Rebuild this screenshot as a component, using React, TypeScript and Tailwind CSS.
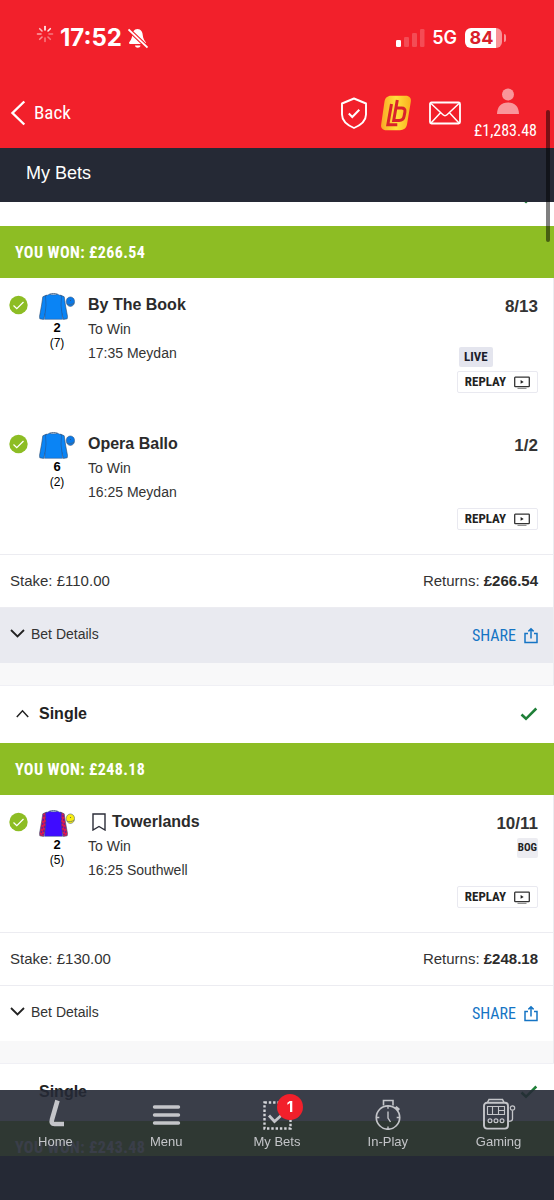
import React from "react";

const condensed =
  "font-['Roboto_Condensed','Liberation_Sans_Narrow',Roboto,sans-serif]";

type Silk = { body: string; sleeve: string; cap: string; checked?: boolean };

type Selection = {
  name: string;
  number: number;
  draw: number;
  event: string;
  odds: string;
  silk: Silk;
  live?: boolean;
  bog?: boolean;
  saved?: boolean;
};

const blueSilk: Silk = { body: "#0a84f5", sleeve: "#0a84f5", cap: "#0a78e6" };
const purpleSilk: Silk = {
  body: "#3f0cff",
  sleeve: "#e0184f",
  cap: "#f8ec10",
  checked: true,
};

const doubleBet: Selection[] = [
  {
    name: "By The Book",
    number: 2,
    draw: 7,
    event: "17:35 Meydan",
    odds: "8/13",
    silk: blueSilk,
    live: true,
  },
  {
    name: "Opera Ballo",
    number: 6,
    draw: 2,
    event: "16:25 Meydan",
    odds: "1/2",
    silk: blueSilk,
  },
];

const singleBet: Selection[] = [
  {
    name: "Towerlands",
    number: 2,
    draw: 5,
    event: "16:25 Southwell",
    odds: "10/11",
    silk: purpleSilk,
    bog: true,
    saved: true,
  },
];

function Tick() {
  return (
    <svg width="18" height="14" viewBox="0 0 18 14" fill="none">
      <path d="M1.5 7.5 6 11.8 16.3 1.5" stroke="#1f7f38" strokeWidth="2.6" />
    </svg>
  );
}

function Silks({ silk }: { silk: Silk }) {
  return (
    <svg width="36" height="27" viewBox="0 0 36 27" fill="none">
      <path
        d="M7.5 2 3.8 3.8 2.6 12 .5 23.500l.3 2.300 3.800.6L8 14Z"
        fill={silk.sleeve}
        stroke="#2c4a6e"
        strokeWidth=".6"
      />
      <path
        d="M21.500 2l3.700 1.800 1.200 8.200 2.100 11.500-.3 2.300-3.800.6L21 14Z"
        fill={silk.sleeve}
        stroke="#2c4a6e"
        strokeWidth=".6"
      />
      {silk.checked && (
        <g stroke="#6b1a9a" strokeWidth="1.4" strokeDasharray="2 2">
          <path d="M5 5 2 25M7 8 4 25M24 5l3 20M22 8l3 17" />
        </g>
      )}
      <path
        d="M10.500 1.300c2.500.7 5.500.7 8 0l4 1.700-.5 9 1.600 14.300H5.500L7 12l-.5-9Z"
        fill={silk.body}
        stroke="#2b4f80"
        strokeWidth=".5"
      />
      <path
        d="M10.500 1.200c2.500-.9 5.500-.9 8 0"
        stroke="#2c4a6e"
        strokeWidth=".8"
      />
      <ellipse
        cx="31.4"
        cy="8.7"
        rx="4.2"
        ry="4.8"
        fill={silk.cap}
        stroke="#3a5575"
        strokeWidth=".5"
      />
      <path d="M28 11c2 1.200 5 .8 7-1" stroke="#4f6470" strokeWidth=".7" />
      <circle cx="31.5" cy="7.5" r=".5" fill="#35506e" />
    </svg>
  );
}

function WonBar({ amount }: { amount: string }) {
  return (
    <div
      className={`${condensed} flex h-13 items-center bg-[#8dbd24] pt-0.5 pl-[15px] text-base font-bold tracking-wide text-white`}
    >
      YOU WON: {amount}
    </div>
  );
}

function SelectionRow({ item }: { item: Selection }) {
  return (
    <div className="flex pt-[15px] pr-[15px] pb-6 pl-2">
      <svg
        className="mt-0.5 shrink-0"
        width="20"
        height="20"
        viewBox="0 0 20 20"
        fill="none"
      >
        <circle cx="10.5" cy="10" r="9.2" fill="#8dbd24" />
        <path d="m5.5 10.5 3.3 3.2L15.5 7" stroke="#fff" strokeWidth="1.3" />
      </svg>
      <div className="ml-[11px] flex w-9 flex-col items-center text-black">
        <Silks silk={item.silk} />
        <span className="text-[13px] leading-4 font-bold">{item.number}</span>
        <span className="text-xs leading-[14px]">({item.draw})</span>
      </div>
      <div className="ml-[13px] flex-1 text-sm text-[#333]">
        <h3 className="flex h-6 items-center text-base font-bold text-[#2b2b2b]">
          {item.saved && (
            <svg
              className="mr-1.5 ml-1"
              width="14"
              height="18"
              viewBox="0 0 14 18"
              fill="none"
            >
              <path
                d="M1 1h12v16l-6-3.5L1 17Z"
                stroke="#2b2d38"
                strokeWidth="1.4"
              />
            </svg>
          )}
          {item.name}
        </h3>
        <p className="leading-6">To Win</p>
        <p className="leading-6">{item.event}</p>
      </div>
      <div className="flex flex-col items-end">
        <span className="mt-0.5 text-[17px] leading-6 font-bold text-[#333]">
          {item.odds}
        </span>
        <div className="flex min-h-[50px] w-full flex-col">
          {item.bog && (
            <span
              className={`${condensed} mt-0.5 h-5 self-end rounded-xs bg-[#ececf1] px-px text-[11px] leading-5 font-bold text-[#222]`}
            >
              BOG
            </span>
          )}
          {item.live && (
            <span
              className={`${condensed} mt-7 mb-1 ml-0.5 h-5 w-[34px] rounded-xs bg-[#e4e5ee] text-center text-[13px] leading-5 font-bold text-[#1b1d2b]`}
            >
              LIVE
            </span>
          )}
        </div>
        <button
          className={`${condensed} flex h-[22px] items-center gap-2 rounded-xs border border-[#e9e9f0] px-[7px] text-[13px] font-bold text-[#222]`}
        >
          REPLAY
          <svg width="16" height="13" viewBox="0 0 16 13" fill="none">
            <rect
              x=".7"
              y="1.2"
              width="14.6"
              height="9.4"
              rx=".6"
              stroke="#333"
              strokeWidth="1.3"
            />
            <path d="M6.6 4v3.8L9.7 5.9Z" fill="#222" />
            <path d="M3.5 12.3h9" stroke="#777" />
          </svg>
        </button>
      </div>
    </div>
  );
}

function BetHeader({ title, open }: { title: string; open?: boolean }) {
  return (
    <button className="flex h-[58px] w-full items-center border-t border-[#f0f0f5] pr-4 pb-0.5 pl-4 text-[#222]">
      <span className="w-[13px]">
        {open && (
          <svg width="13" height="9" viewBox="0 0 13 9" fill="none">
            <path d="m.8 8 5.7-6.200L12.200 8" stroke="#222" strokeWidth="1.5" />
          </svg>
        )}
      </span>
      <span className="ml-2.5 flex-1 text-left text-base font-bold">
        {title}
      </span>
      <Tick />
    </button>
  );
}

function BetFooter({
  stake,
  returns,
  shaded,
}: {
  stake: string;
  returns: string;
  shaded?: boolean;
}) {
  return (
    <>
      <div className="flex h-[53px] items-center justify-between border-t border-[#ececf1] pr-[15px] pl-2.5 text-[15px] text-[#333]">
        <span>Stake: {stake}</span>
        <span>
          Returns: <b className="text-[#2b2b2b]">{returns}</b>
        </span>
      </div>
      <div
        className={`flex h-14 items-center justify-between border-t border-[#ececf1] pr-[15px] pl-2.5 ${shaded ? "bg-[#e9eaf0]" : "bg-white"}`}
      >
        <button className="flex items-center gap-1.5 pb-1 text-sm text-[#333]">
          <svg width="15" height="9" viewBox="0 0 15 9" fill="none">
            <path d="m1 1 6.5 6.5L14 1" stroke="#222" strokeWidth="1.8" />
          </svg>
          Bet Details
        </button>
        <button
          className={`${condensed} flex items-center gap-2 text-base text-[#1574c4]`}
        >
          SHARE
          <svg width="14" height="17" viewBox="0 0 14 17" fill="none">
            <path
              d="M4 6.5H1v9h12v-9h-3M7 11.5V2M4.4 4.4 7 1.8l2.6 2.6"
              stroke="#1574c4"
              strokeWidth="1.5"
            />
          </svg>
        </button>
      </div>
      <div className="h-[22px] bg-[#f8f8f9]" />
    </>
  );
}

function StatusBar() {
  return (
    <div className="flex h-[76px] items-center pr-12 pl-9 font-[Inter,sans-serif] text-white">
      <svg
        className="mb-2"
        width="18"
        height="18"
        viewBox="0 0 18 18"
        fill="none"
      >
        <g stroke="#fff" strokeWidth="1.6" strokeLinecap="round">
          <path d="M9 1.5V5" />
          <path d="M14.3 3.7 12 6" opacity=".9" />
          <path d="M16.5 9H13" opacity=".4" />
          <path d="M14.3 14.3 12 12" opacity=".4" />
          <path d="M9 16.5V13" opacity=".4" />
          <path d="M3.7 14.3 6 12" opacity=".5" />
          <path d="M1.5 9H5" opacity=".6" />
          <path d="M3.7 3.7 6 6" opacity=".7" />
        </g>
      </svg>
      <span className="ml-1.5 text-2xl font-bold">17:52</span>
      <svg
        className="ml-1.5"
        width="20"
        height="21"
        viewBox="0 0 20 21"
        fill="none"
      >
        <path
          d="M9.5 1C6 1.2 4.3 4 4.2 7.5 4 11 2 13 1.2 14.3c-.5 1 0 1.7 1 1.7h14.6c1 0 1.5-.7 1-1.7-.8-1.3-2.8-3.3-3-6.8C14.7 4 13 1.2 9.5 1Z"
          fill="#fff"
        />
        <path d="M7 17.5h5.5c-.3 3-5.2 3-5.5 0Z" fill="#fff" />
        <path d="m.5 1.5 19 18" stroke="#f2202b" strokeWidth="4" />
        <path d="m.5 1.5 19 18" stroke="#fff" strokeWidth="1.8" />
      </svg>
      <div className="flex-1" />
      <svg width="30" height="18" viewBox="0 0 30 18" fill="#fff">
        <rect x="0" y="11" width="5" height="7" rx="1.3" />
        <rect x="8" y="8" width="5" height="10" rx="1.3" opacity=".2" />
        <rect x="16" y="4" width="5" height="14" rx="1.3" opacity=".2" />
        <rect x="24" y="0" width="4.5" height="18" rx="1.3" opacity=".2" />
      </svg>
      <span className="ml-1.5 text-lg font-semibold">5G</span>
      <span className="ml-2 flex h-5 w-[37px] items-center justify-center rounded-md bg-linear-to-r from-white from-84% to-[#f99297] to-84% pr-1 text-lg font-bold text-[#d8202b]">
        84
      </span>
      <span className="ml-0.5 h-2 w-0.5 rounded-r-full bg-[#f99297]" />
    </div>
  );
}

function TopBar() {
  return (
    <div
      className={`${condensed} flex h-18 items-center pt-0.5 pr-[17px] pl-2.5 text-white`}
    >
      <button className="flex items-center gap-2 text-[19px]">
        <svg width="16" height="26" viewBox="0 0 16 26" fill="none">
          <path
            d="M14.3 1.5 2.5 13l11.8 11.5"
            stroke="#fff"
            strokeWidth="2.4"
          />
        </svg>
        Back
      </button>
      <div className="flex-1" />
      <button aria-label="Safer gambling">
        <svg
          width="28"
          height="32"
          viewBox="0 0 28 32"
          fill="none"
          stroke="#fff"
        >
          <path
            d="M14 1.500 26 6.500v11c0 6-5 10.500-12 13.500C7 28 2 23.500 2 17.500v-11Z"
            strokeWidth="1.9"
            strokeLinejoin="round"
          />
          <path d="m8.800 16.500 3.500 3.500 7-7.200" strokeWidth="2" />
        </svg>
      </button>
      <button aria-label="Ladbucks" className="ml-3">
        <svg width="32" height="36" viewBox="0 0 32 36" fill="none">
          <defs>
            <linearGradient id="gold" x1="0" y1="0" x2="1" y2="0">
              <stop offset="0" stopColor="#f9a825" />
              <stop offset=".5" stopColor="#ffe13c" />
              <stop offset="1" stopColor="#fbb01e" />
            </linearGradient>
          </defs>
          <path
            d="M11 .8h14.500c4 0 6 2.400 5.300 6L27 29.500c-.7 3.600-3.500 5.700-7 5.700H6.500c-4 0-6-2.400-5.300-6L4.500 6.500C5.100 3 7.500.8 11 .8Z"
            fill="url(#gold)"
          />
          <path d="M11.500 9 7.800 29.700h9.500" stroke="#d9222b" strokeWidth="3" />
          <path
            d="m17.300 5-3.600 20.500h5.500c3 0 4.400-1.400 4.900-4.200l.8-4.300c.5-2.800-.8-4-3.300-4h-5.200"
            stroke="#d9222b"
            strokeWidth="3"
          />
        </svg>
      </button>
      <button aria-label="Messages" className="ml-4">
        <svg
          width="34"
          height="24"
          viewBox="0 0 34 24"
          fill="none"
          stroke="#fff"
        >
          <rect x="2" y="1.5" width="30" height="21" rx="1.5" strokeWidth="1.8" />
          <path
            d="m3 2.500 12 11.300c1.300 1.200 2.700 1.200 4 0L31 2.500M3 22l9.500-10.300M31 22l-9.500-10.300"
            strokeWidth="1.5"
          />
        </svg>
      </button>
      <button className="mt-1 ml-3 flex flex-col items-center gap-1 text-base leading-6">
        <svg
          className="ml-1"
          width="24"
          height="28"
          viewBox="0 0 24 28"
          fill="#f9969b"
        >
          <circle cx="12" cy="7.5" r="6" />
          <path d="M1 27c.3-7.500 4-11.500 11-11.500S22.700 19.500 23 27Z" />
        </svg>
        £1,283.48
      </button>
    </div>
  );
}

function LogoIcon() {
  return (
    <svg width="32" height="32" viewBox="0 0 32 32" fill="none">
      <path
        d="M18.500 2.500 13 21.500c-.8 2.800 0 4.500 2.500 4.500H25"
        stroke="#c4c5c9"
        strokeWidth="4.6"
      />
    </svg>
  );
}

function MenuIcon() {
  return (
    <svg width="32" height="32" viewBox="0 0 32 32" fill="none">
      <path
        d="M4.500 9h24M4.500 17h24M4.500 25h24"
        stroke="#c4c5c9"
        strokeWidth="3.4"
        strokeLinecap="round"
      />
    </svg>
  );
}

function BetsIcon() {
  return (
    <svg width="32" height="32" viewBox="0 0 32 32" fill="none">
      <rect
        x="3.5"
        y="4.5"
        width="26"
        height="26"
        stroke="#d4d5d9"
        strokeWidth="2.4"
        strokeDasharray="2.4 1.9"
      />
      <path d="m8 17.500 5.500 6 11-10" stroke="#c4c5c9" strokeWidth="2.8" />
    </svg>
  );
}

function StopwatchIcon() {
  return (
    <svg
      width="32"
      height="32"
      viewBox="0 0 32 32"
      fill="none"
      stroke="#c4c5c9"
    >
      <circle cx="16" cy="19.5" r="11.7" strokeWidth="1.7" />
      <path d="M11.500 7.500v-5H21v5" strokeWidth="1.6" />
      <path d="m23.500 9 3.500 3.200" strokeWidth="3" />
      <path
        d="M16 13.500V20l2.500 4M16 8v2.800M16 28.500V31M4.500 19.500h2.800M24.700 19.500h2.800"
        strokeWidth="1.4"
      />
    </svg>
  );
}

function SlotsIcon() {
  return (
    <svg
      width="36"
      height="32"
      viewBox="0 0 36 32"
      fill="none"
      stroke="#c4c5c9"
    >
      <path d="M6.500 4.500 8 1.500h13.500L23 4.500" strokeWidth="1.5" />
      <rect x="3" y="4.8" width="24" height="25.8" rx="3" strokeWidth="1.9" />
      <path
        d="M6.500 8.500h17v8h-17ZM11.500 8.500v8M17.500 8.500v8M17.500 12.500h6"
        strokeWidth="1.1"
      />
      <circle cx="9" cy="22.8" r="1.9" strokeWidth="1.2" />
      <circle cx="15" cy="22.8" r="1.9" strokeWidth="1.2" />
      <circle cx="21" cy="22.8" r="1.9" strokeWidth="1.2" />
      <circle cx="31.5" cy="10" r="2.2" strokeWidth="1.2" />
      <path d="M31.500 12.500V21c0 1.500-1 2.300-4 2.300" strokeWidth="1.3" />
    </svg>
  );
}

const tabs = [
  { label: "Home", icon: <LogoIcon /> },
  { label: "Menu", icon: <MenuIcon /> },
  { label: "My Bets", icon: <BetsIcon />, badge: 1 },
  { label: "In-Play", icon: <StopwatchIcon /> },
  { label: "Gaming", icon: <SlotsIcon /> },
];

function BottomNav() {
  return (
    <nav className="fixed inset-x-0 bottom-0">
      <div className="flex h-[66px] bg-[#252935]/90 pt-2">
        {tabs.map((tab) => (
          <a
            key={tab.label}
            href="#"
            className="flex flex-1 flex-col items-center text-[13px] leading-5 text-[#c4c5c9]"
          >
            <span className="relative mb-0.5">
              {tab.icon}
              {tab.badge && (
                <span className="absolute -top-1 left-4 flex size-[26px] items-center justify-center rounded-full bg-[#f2202b] font-[Inter,sans-serif] text-[15px] font-bold text-white">
                  {tab.badge}
                </span>
              )}
            </span>
            {tab.label}
          </a>
        ))}
      </div>
      <div className="h-11 bg-[#252935]" />
    </nav>
  );
}

export default function App() {
  return (
    <div className="flex h-screen flex-col overflow-hidden bg-white font-['Liberation_Sans',Arial,sans-serif]">
      <header className="shrink-0">
        <div className="bg-[#f2202b]">
          <StatusBar />
          <TopBar />
        </div>
        <h1 className="flex h-[54px] items-center bg-[#252935] pb-1 pl-[26px] text-lg text-white">
          My Bets
        </h1>
      </header>
      <main className="min-h-0 flex-1 overflow-hidden">
        <section>
          <div className="flex h-6 justify-end overflow-hidden pr-4">
            <div className="-mt-3">
              <Tick />
            </div>
          </div>
          <WonBar amount="£266.54" />
          <div className="border-r border-[#ececf0]">
            {doubleBet.map((item) => (
              <SelectionRow key={item.name} item={item} />
            ))}
            <BetFooter stake="£110.00" returns="£266.54" shaded />
          </div>
        </section>
        <section>
          <BetHeader title="Single" open />
          <WonBar amount="£248.18" />
          <div className="border-r border-[#ececf0]">
            {singleBet.map((item) => (
              <SelectionRow key={item.name} item={item} />
            ))}
            <BetFooter stake="£130.00" returns="£248.18" />
          </div>
        </section>
        <section>
          <BetHeader title="Single" />
          <WonBar amount="£243.48" />
        </section>
      </main>
      <div className="fixed top-[110px] right-1 h-[132px] w-1 rounded-full bg-black/50" />
      <BottomNav />
    </div>
  );
}
